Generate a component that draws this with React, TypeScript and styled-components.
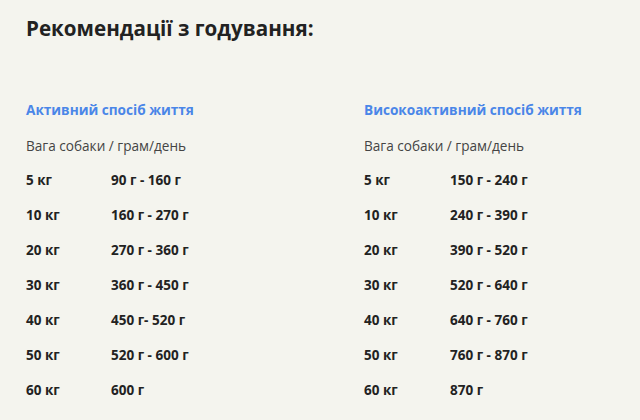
import React from "react";
import styled, { createGlobalStyle } from "styled-components";

const Global = createGlobalStyle`
  html, body { margin: 0; padding: 0; background: #f4f4ee; }
  body { font-family: "Open Sans", "Noto Sans", sans-serif; color: #222; }
`;

const Page = styled.div`
  padding: 13px 26px 0 26px;
  width: 640px;
  height: 420px;
  box-sizing: border-box;
  overflow: hidden;
`;

const Title = styled.h2`
  margin: 0;
  font-size: 20.6px;
  line-height: 30px;
  font-weight: 700;
  color: #222;
`;

const Columns = styled.div`
  display: grid;
  grid-template-columns: 338px 1fr;
  margin-top: 57px;
`;

const Column = styled.section`
  display: flex;
  flex-direction: column;
`;

const Heading = styled.h3`
  margin: 0;
  font-size: 13.6px;
  line-height: 20px;
  font-weight: 700;
  color: #4a86e8;
`;

const Subtitle = styled.div`
  margin-top: 16px;
  font-size: 13.6px;
  line-height: 20px;
  color: #444;
`;

const Table = styled.div`
  margin-top: 14px;
  display: flex;
  flex-direction: column;
  gap: 15px;
`;

const Row = styled.div<{ $weightWidth: number }>`
  display: grid;
  grid-template-columns: ${(p) => p.$weightWidth}px 1fr;
  font-size: 13.5px;
  line-height: 20px;
  font-weight: 700;
  color: #222;
`;

type Col = { title: string; weightWidth: number; rows: [string, string][] };

const data: Col[] = [
  {
    title: "Активний спосіб життя",
    weightWidth: 85,
    rows: [
      ["5 кг", "90 г - 160 г"],
      ["10 кг", "160 г - 270 г"],
      ["20 кг", "270 г - 360 г"],
      ["30 кг", "360 г - 450 г"],
      ["40 кг", "450 г- 520 г"],
      ["50 кг", "520 г - 600 г"],
      ["60 кг", "600 г"],
    ],
  },
  {
    title: "Високоактивний спосіб життя",
    weightWidth: 86,
    rows: [
      ["5 кг", "150 г - 240 г"],
      ["10 кг", "240 г - 390 г"],
      ["20 кг", "390 г - 520 г"],
      ["30 кг", "520 г - 640 г"],
      ["40 кг", "640 г - 760 г"],
      ["50 кг", "760 г - 870 г"],
      ["60 кг", "870 г"],
    ],
  },
];

export default function App() {
  return (
    <>
      <Global />
      <Page>
        <Title>Рекомендації з годування:</Title>
        <Columns>
          {data.map((c) => (
            <Column key={c.title}>
              <Heading>{c.title}</Heading>
              <Subtitle>Вага собаки / грам/день</Subtitle>
              <Table>
                {c.rows.map(([w, g]) => (
                  <Row key={w} $weightWidth={c.weightWidth}>
                    <span>{w}</span>
                    <span>{g}</span>
                  </Row>
                ))}
              </Table>
            </Column>
          ))}
        </Columns>
      </Page>
    </>
  );
}
